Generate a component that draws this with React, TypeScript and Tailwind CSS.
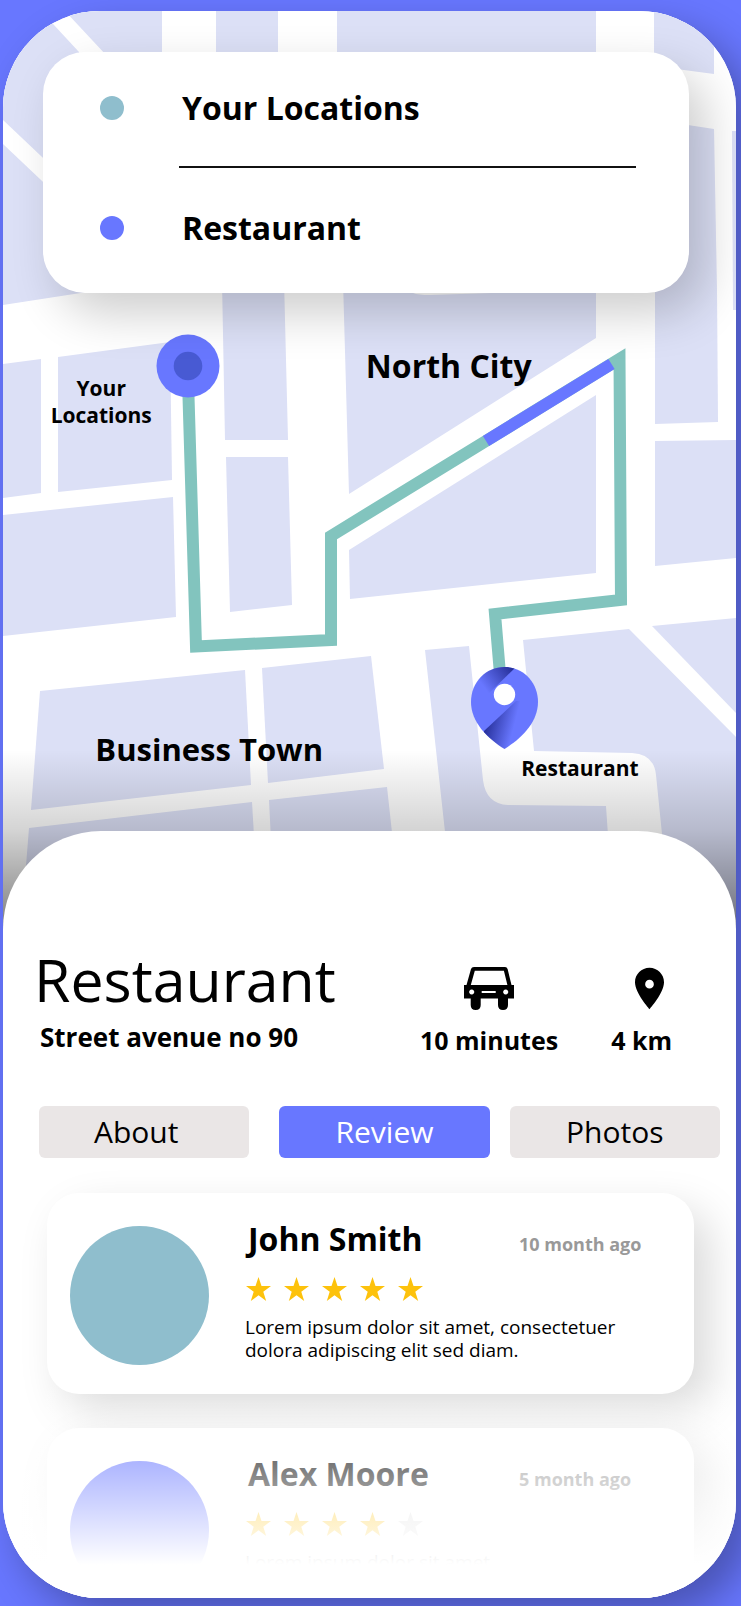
import { useState } from "react";

const blocks = [
  "3,11 41,11 79,52 79,192 3,120",
  "65,11 162,11 162,70 120,70",
  "216,11 278,11 278,70 216,70",
  "337,11 596,11 596,70 337,70",
  "654,11 714,11 714,74 654,66",
  "655,120 714,129 717,290 718,422 655,424",
  "732,131 736,131 736,310 733,310",
  "655,441 736,440 736,558 655,566",
  "652,626 736,618 736,713",
  "3,144 60,198 100,290 3,305",
  "3,364 41,359 41,493 3,498",
  "58,357 170,342 172,480 58,492",
  "3,515 173,497 176,617 3,636",
  "222,280 284,280 288,440 225,440",
  "226,457 288,457 292,605 230,612",
  "343,280 596,280 596,338 349,494",
  "349,550 596,395 596,573 350,599",
  "40,691 245,670 251,785 31,810",
  "262,668 371,656 384,769 268,783",
  "29,828 252,802 256,870 256,941 20,941",
  "269,800 387,787 395,860 272,860",
];

function CityMap() {
  return (
    <svg viewBox="3 11 733 930" className="absolute inset-0 h-full w-full" aria-hidden="true">
      <defs>
        <linearGradient id="fade" x1="0" y1="750" x2="0" y2="941" gradientUnits="userSpaceOnUse">
          <stop offset="0" stopColor="#000" stopOpacity="0" />
          <stop offset="0.42" stopColor="#000" stopOpacity="0.17" />
          <stop offset="1" stopColor="#000" stopOpacity="0.55" />
        </linearGradient>
        <linearGradient id="pinLow" x1="484" y1="731" x2="511" y2="738" gradientUnits="userSpaceOnUse">
          <stop offset="0" stopColor="#27309a" />
          <stop offset="1" stopColor="#27309a" stopOpacity="0" />
        </linearGradient>
        <linearGradient id="pinTop" x1="513" y1="670" x2="486" y2="690" gradientUnits="userSpaceOnUse">
          <stop offset="0" stopColor="#27309a" />
          <stop offset="1" stopColor="#27309a" stopOpacity="0" />
        </linearGradient>
        <clipPath id="pinShape">
          <path d="M504.500 667C523 667 538 682 538 702C538 722 522 738 504.500 749C487 738 471 722 471 702C471 682 486 667 504.500 667Z" />
        </clipPath>
      </defs>
      <rect x="3" y="11" width="733" height="930" fill="#fff" />
      <g fill="#dce0f6">
        {blocks.map((points) => (
          <polygon key={points} points={points} />
        ))}
        <path d="M523 640L629 629L736 737V941H672L662 834L656 775Q654 754 632 753L534 751Z" />
        <path d="M425 650L469 646L483 780Q486 804 508 805L606 806L609 850H447Z" />
      </g>
      <path d="M413 293Q418 295 430 295L492 293Z" fill="#fff" />
      <rect x="3" y="750" width="733" height="191" fill="url(#fade)" />
      <polyline
        points="188,380 196,646.500 331,640 331,536 619.500,359 621,600 495,614 500.500,680"
        fill="none"
        stroke="#82c4be"
        strokeWidth="12"
        strokeMiterlimit="10"
      />
      <line x1="486" y1="441" x2="611.500" y2="364" stroke="#6877ff" strokeWidth="12" />
      <circle cx="188" cy="366" r="31.500" fill="#6877ff" />
      <circle cx="188" cy="366" r="14.300" fill="#485ad3" />
      <g clipPath="url(#pinShape)">
        <rect x="470" y="666" width="70" height="84" fill="#6877ff" />
        <polygon points="484,731 516,701 540,701 540,750 484,750" fill="url(#pinLow)" />
        <polygon points="517,666 480,702 470,702 470,666" fill="url(#pinTop)" />
        <circle cx="504.500" cy="694.500" r="10.700" fill="#fff" />
      </g>
    </svg>
  );
}

function Car() {
  return (
    <svg viewBox="0 0 50 43" className="h-[43px] w-[50px]" aria-hidden="true">
      <path
        fillRule="evenodd"
        d="M10 0H41Q43 0 43.600 2L47.500 18H50V31.500H44V38Q44 43 39 43Q34 43 34 38V31.500H16.700V38Q16.700 43 11.700 43Q6.700 43 6.700 38V31.500H0V18H2.500L7 2Q7.600 0 10 0ZM10.800 3.700L6.800 18H43.400L39.900 3.700ZM7.700 22.600A2.500 2.500 0 1 0 7.710 22.600ZM41.700 22.600A2.500 2.500 0 1 0 41.710 22.600ZM17.700 24V26H31.700V24Z"
      />
    </svg>
  );
}

function Place() {
  return (
    <svg viewBox="5 2 14 20" className="h-[43px] w-[29px]" aria-hidden="true">
      <path
        fillRule="evenodd"
        d="M12 2C8.130 2 5 5.130 5 9c0 5.250 7 13 7 13s7-7.750 7-13c0-3.870-3.130-7-7-7zm0 10a2.100 2.100 0 1 1 0-4.200 2.100 2.100 0 0 1 0 4.200z"
      />
    </svg>
  );
}

function Stars({ value }: { value: number }) {
  return (
    <div className="mt-[18px] flex gap-[13px] pl-px" role="img" aria-label={`${value} of 5 stars`}>
      {[1, 2, 3, 4, 5].map((n) => (
        <svg
          key={n}
          viewBox="0 0 25 24"
          className={n <= value ? "h-6 w-[25px] fill-[#fdc20c]" : "h-6 w-[25px] fill-[#dddddd]"}
        >
          <path d="M12.500 0L15.500 9.100H25L17.300 14.700L20.200 24L12.500 18.300L4.800 24L7.700 14.700L0 9.100H9.500Z" />
        </svg>
      ))}
    </div>
  );
}

type Review = { name: string; when: string; stars: number; text: string; avatar: string };

const reviews: Review[] = [
  {
    name: "John Smith",
    when: "10 month ago",
    stars: 5,
    text: "Lorem ipsum dolor sit amet, consectetuer dolora adipiscing elit sed diam.",
    avatar: "bg-[#8fbecd]",
  },
  {
    name: "Alex Moore",
    when: "5 month ago",
    stars: 4,
    text: "Lorem ipsum dolor sit amet",
    avatar: "bg-[#6877ff]",
  },
];

function ReviewCard({ review }: { review: Review }) {
  return (
    <li className="flex min-h-[201px] gap-9 rounded-[32px] bg-white pr-[54px] pl-[23px] shadow-[16px_18px_44px_rgba(0,0,0,0.15)]">
      <div className={`mt-[33px] size-[139px] shrink-0 rounded-full ${review.avatar}`} />
      <div className="flex-1 pt-[26px]">
        <div className="flex items-baseline justify-between">
          <h3 className="pl-[3px] text-[32px] leading-10 font-bold">{review.name}</h3>
          <time className="w-[121px] text-[18px] leading-6 font-bold whitespace-nowrap text-[#999999]">
            {review.when}
          </time>
        </div>
        <Stars value={review.stars} />
        <p className="mt-[15px] text-[19px] leading-[23px]">{review.text}</p>
      </div>
    </li>
  );
}

const tabs = ["About", "Review", "Photos"];

export default function App() {
  const [active, setActive] = useState("Review");
  return (
    <div className="min-h-screen overflow-hidden bg-[#6877ff] pt-[11px] pr-[5px] pb-2 pl-[3px] font-['Open_Sans','Noto_Sans',sans-serif] text-black">
      <main className="overflow-hidden rounded-[97px] bg-white shadow-[16px_18px_40px_rgba(0,0,0,0.3)]">
        <section className="relative aspect-[733/930] pt-[41px] pr-[47px] pl-10">
          <CityMap />
          <ul className="relative rounded-[42px] bg-white pt-9 pr-[53px] pb-[45px] pl-[57px] shadow-[16px_20px_48px_rgba(0,0,0,0.2)]">
            <li className="flex items-center">
              <span className="size-6 rounded-full bg-[#8fbecd]" />
              <span className="pl-[58px] text-[32px] leading-10 font-bold">Your Locations</span>
            </li>
            <li className="mt-[38px] mb-10 ml-[79px] h-0.5 bg-[#111111]" role="separator" />
            <li className="flex items-center">
              <span className="size-6 rounded-full bg-[#6877ff]" />
              <span className="pl-[58px] text-[32px] leading-10 font-bold">Restaurant</span>
            </li>
          </ul>
          <span className="absolute top-[36%] left-[49.5%] text-[32px] leading-10 font-bold">North City</span>
          <span className="absolute top-[77.2%] left-[12.6%] text-[31px] leading-10 font-bold">Business Town</span>
          <span className="absolute top-[39.1%] left-[6.5%] text-center text-[21px] leading-[27px] font-bold">
            Your
            <br />
            Locations
          </span>
          <span className="absolute top-[80%] left-[70.7%] text-[21px] leading-[27px] font-bold">Restaurant</span>
        </section>

        <section className="relative -mt-[110px] rounded-t-[98px] bg-white pt-[112px]">
          <header className="flex justify-between pr-[64px] pl-[31px]">
            <div>
              <h1 className="text-[59px] leading-[72px]">Restaurant</h1>
              <p className="mt-1 ml-1.5 text-[26px] leading-9 font-bold">Street avenue no 90</p>
            </div>
            <div className="flex gap-[53px] pt-6 text-[25px] leading-9 font-bold">
              <div className="flex flex-col items-center gap-3">
                <Car />
                <span>10 minutes</span>
              </div>
              <div className="flex flex-col items-center gap-3">
                <div className="pl-4">
                  <Place />
                </div>
                <span>4 km</span>
              </div>
            </div>
          </header>

          <nav className="mt-12 flex gap-5 pr-4 pl-9 text-[30px] leading-[52px]">
            {tabs.map((tab) => (
              <button
                key={tab}
                type="button"
                onClick={() => setActive(tab)}
                className={`group h-[52px] flex-1 rounded-md first:mr-[10px] ${
                  active === tab ? "bg-[#6877ff] text-white" : "bg-[#eae6e6]"
                }`}
              >
                <span className="group-first:pr-4">{tab}</span>
              </button>
            ))}
          </nav>

          <div className="relative h-[440px] overflow-hidden pt-[35px] pr-[42px] pl-11">
            <ul className="flex flex-col gap-[34px]">
              {reviews.map((review) => (
                <ReviewCard key={review.name} review={review} />
              ))}
            </ul>
            <div className="pointer-events-none absolute inset-x-0 bottom-0 h-[223px] bg-linear-to-b from-white/0 to-white to-85%" />
          </div>
        </section>
      </main>
    </div>
  );
}
